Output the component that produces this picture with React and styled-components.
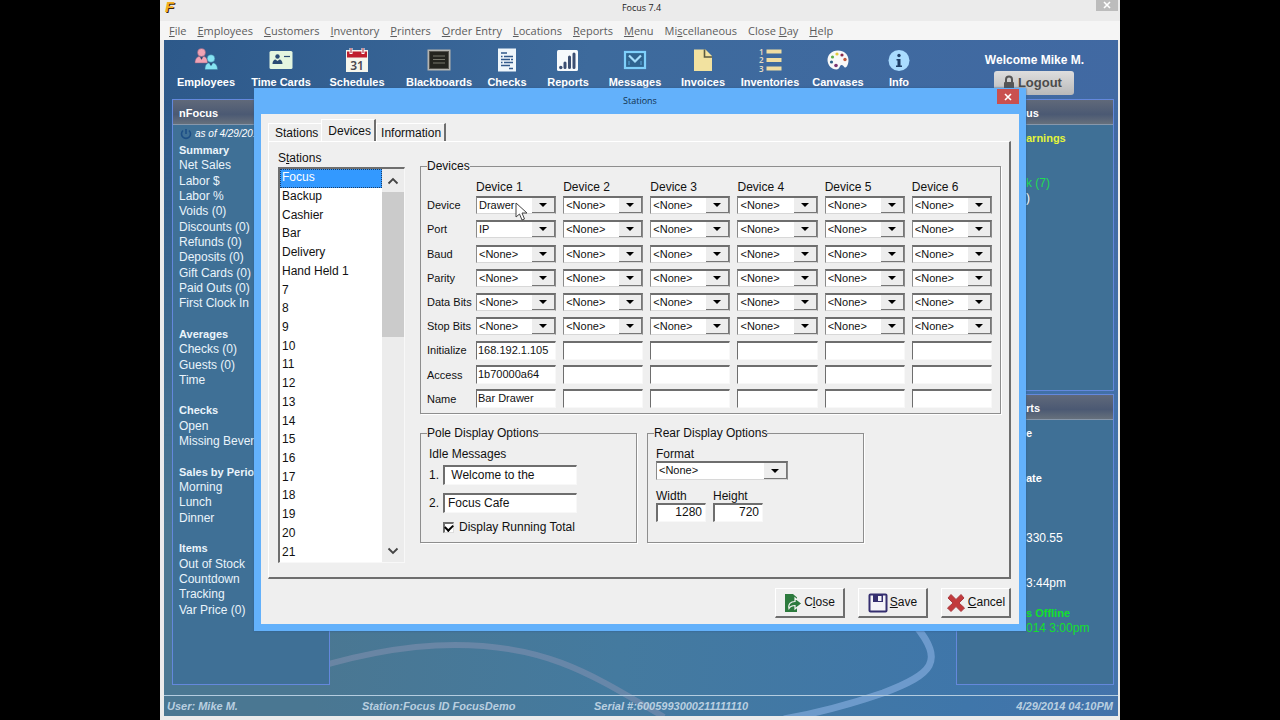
import React from 'react';
import { styled, createGlobalStyle } from 'styled-components';

const menuItems = [
    ['', 'F', 'ile'],
    ['', 'E', 'mployees'],
    ['', 'C', 'ustomers'],
    ['', 'I', 'nventory'],
    ['', 'P', 'rinters'],
    ['', 'O', 'rder Entry'],
    ['', 'L', 'ocations'],
    ['', 'R', 'eports'],
    ['', 'M', 'enu'],
    ['Mi', 's', 'cellaneous'],
    ['Close ', 'D', 'ay'],
    ['', 'H', 'elp'],
];

const summaryRows = [
    '#Summary', 'Net Sales', 'Labor $', 'Labor %', 'Voids (0)', 'Discounts (0)', 'Refunds (0)',
    'Deposits (0)', 'Gift Cards (0)', 'Paid Outs (0)', 'First Clock In', '',
    '#Averages', 'Checks (0)', 'Guests (0)', 'Time', '',
    '#Checks', 'Open', 'Missing Beverages', '',
    '#Sales by Period', 'Morning', 'Lunch', 'Dinner', '',
    '#Items', 'Out of Stock', 'Countdown', 'Tracking', 'Var Price (0)',
];

const stations = ['Focus', 'Backup', 'Cashier', 'Bar', 'Delivery', 'Hand Held 1'];
for (let i = 7; i <= 21; i++) stations.push(String(i));

const devices = [1, 2, 3, 4, 5, 6];
const selectRows = [
    { label: 'Device', first: 'Drawer' },
    { label: 'Port', first: 'IP' },
    { label: 'Baud' },
    { label: 'Parity' },
    { label: 'Data Bits' },
    { label: 'Stop Bits' },
];
const textRows = [
    { label: 'Initialize', first: '168.192.1.105' },
    { label: 'Access', first: '1b70000a64' },
    { label: 'Name', first: 'Bar Drawer' },
];

const tools = [
    {
        name: 'Employees', width: 74, icon: (
            <>
                <g fill="#f0a3b4" stroke="#8a5a78" strokeWidth="0.5">
                    <circle cx="7.500" cy="4.500" r="4" />
                    <path d="M1 15c0-4 2-6.500 4.500-6.500L7.500 11l2-2.500C12 8.500 13.500 11 13.500 15z" />
                </g>
                <path d="M6.500 9.500h2L7.500 12z" fill="#26456e" />
                <g fill="#86e3f2" stroke="#3a7fa0" strokeWidth="0.500">
                    <circle cx="17" cy="10.500" r="3.800" />
                    <path d="M11 21.500c0-4 1.500-6.500 4-6.500l2 2.500 2-2.500c2.500 0 4.500 2.500 4.500 6.500z" />
                </g>
                <path d="M16 15.500h2l-1 2.500z" fill="#26456e" />
            </>
        ),
    },
    {
        name: 'Time Cards', width: 76, icon: (
            <>
                <rect x="0.500" y="3" width="23" height="18" rx="1.500" fill="#e4f6e0" />
                <circle cx="8.500" cy="8.500" r="2.200" fill="#2a4c74" />
                <path d="M3.500 16c0-3 1.500-4.500 3-4.500l2 1.500 2-1.500c1.500 0 3 1.500 3 4.500z" fill="#2a4c74" />
                <path d="M15 8.500h6" stroke="#2a4c74" strokeWidth="1.200" />
            </>
        ),
    },
    {
        name: 'Schedules', width: 76, icon: (
            <>
                <rect x="1" y="2" width="22" height="22" fill="#f6f6ec" />
                <rect x="2" y="3.500" width="20" height="6" fill="#c01f2e" />
                <path d="M6 0v6M18 0v6" stroke="#fff" strokeWidth="3" />
                <path d="M6 0v5M18 0v5" stroke="#a01828" strokeWidth="1" />
                <text x="12" y="21.500" textAnchor="middle" fontFamily="'Noto Sans', sans-serif" fontSize="12" fontWeight="600" fill="#4a4a50">31</text>
            </>
        ),
    },
    {
        name: 'Blackboards', width: 88, icon: (
            <>
                <rect x="0.500" y="1.500" width="23" height="21" fill="#b4b4b0" />
                <rect x="2" y="3" width="20" height="18" fill="#55544f" />
                <rect x="3" y="4" width="18" height="16" fill="#24241f" />
                <path d="M6 8h12M6 11.500h12M6 15h12" stroke="#77776c" strokeWidth="1" />
            </>
        ),
    },
    {
        name: 'Checks', width: 48, icon: (
            <>
                <rect x="3" y="0.500" width="18" height="23" fill="#eef6fb" />
                <path d="M6 5h6M6 8.500h1.500M9 8.500h9M6 11.500h9M16 11.500h2M6 14.500h1.500M9 14.500h9M6 17.500h9M14 20.500h4" stroke="#31598a" strokeWidth="1.400" />
            </>
        ),
    },
    {
        name: 'Reports', width: 74, icon: (
            <>
                <rect x="1" y="2" width="21" height="21" rx="1.500" fill="#f7fafc" />
                <path d="M9 19.500V15M13.500 19.500V9M18 19.500V6" stroke="#3c4f72" strokeWidth="3" strokeLinecap="round" />
                <circle cx="4.800" cy="19.500" r="1.700" fill="#3c4f72" />
            </>
        ),
    },
    {
        name: 'Messages', width: 60, icon: (
            <>
                <rect x="2" y="4" width="20" height="16" fill="#2f6490" stroke="#7fd0fb" strokeWidth="2.200" />
                <path d="M6 7.500l6 6 6-6" fill="none" stroke="#a5defc" strokeWidth="2.200" />
                <path d="M6 17v-4M18 17v-4" stroke="#5aa9dc" strokeWidth="1" />
            </>
        ),
    },
    {
        name: 'Invoices', width: 76, icon: (
            <>
                <path d="M3 1.500h11.500L21 8v15H3z" fill="#f2e2a0" />
                <path d="M13.500 1.500V9H21" fill="none" stroke="#5a5a40" strokeWidth="1.600" />
            </>
        ),
    },
    {
        name: 'Inventories', width: 58, icon: (
            <>
                <path d="M8.500 3.500h15M8.500 12h15M8.500 20.500h15" stroke="#f0dda2" strokeWidth="4" />
                <g fontFamily="'Noto Sans', sans-serif" fontSize="8" fontWeight="600" fill="#e4dcc4">
                    <text x="1" y="6.500">1</text>
                    <text x="1" y="15">2</text>
                    <text x="1" y="23.500">3</text>
                </g>
            </>
        ),
    },
    {
        name: 'Canvases', width: 78, icon: (
            <>
                <path d="M12 2.500C5.500 2.500 1.500 7 1.500 12s4 9.500 9 9.500c3.500 0 2.500-4 5-4.500 2-.4 2.500 3 4 2.500C21.500 18.800 22.500 15 22.500 12c0-5.500-4.500-9.500-10.500-9.500z" fill="#f8f8f8" />
                <circle cx="11" cy="6" r="1.600" fill="#e2c93b" />
                <circle cx="16" cy="7" r="1.600" fill="#8a2a4a" />
                <circle cx="6.500" cy="9" r="1.600" fill="#5fae4a" />
                <circle cx="5.500" cy="14" r="1.600" fill="#2b5f86" />
                <circle cx="10" cy="17.500" r="1.800" fill="#7a3470" />
                <circle cx="19" cy="11.500" r="1.700" fill="#c0563a" />
            </>
        ),
    },
    {
        name: 'Info', width: 44, icon: (
            <>
                <circle cx="12" cy="12.500" r="10.500" fill="#a9dcff" />
                <circle cx="12" cy="7.500" r="1.700" fill="#1f3f68" />
                <path d="M9.500 11h4v6.500h1.500V19h-6v-1.500h1.500v-5H9.500z" fill="#1f3f68" />
            </>
        ),
    },
];

function Cross() {
    return (
        <svg width="8" height="8" viewBox="0 0 8 8" aria-hidden="true">
            <path d="M1 1l6 6M7 1l-6 6" stroke="#fff" strokeWidth="1.600" />
        </svg>
    );
}

function DropDown({ value = '<None>', tall, ...rest }) {
    return (
        <SelectBox $tall={tall}>
            <Select defaultValue={value} {...rest}>
                <option>{value}</option>
            </Select>
            <SelectArrow aria-hidden="true">
                <svg width="8" height="4" viewBox="0 0 8 4"><path d="M0 0h8L4 4z" fill="#000" /></svg>
            </SelectArrow>
        </SelectBox>
    );
}

function DeviceGrid() {
    return (
        <Grid>
            <span />
            {devices.map((n) => <ColumnHead key={n}>Device {n}</ColumnHead>)}
            {selectRows.map((row) => (
                <React.Fragment key={row.label}>
                    <RowHead>{row.label}</RowHead>
                    {devices.map((n) => (
                        <DropDown
                            key={n}
                            value={n === 1 && row.first ? row.first : '<None>'}
                            aria-label={`${row.label}, Device ${n}`}
                        />
                    ))}
                </React.Fragment>
            ))}
            {textRows.map((row) => (
                <React.Fragment key={row.label}>
                    <RowHead>{row.label}</RowHead>
                    {devices.map((n) => (
                        <TextBox
                            key={n}
                            $small
                            defaultValue={n === 1 ? row.first : ''}
                            aria-label={`${row.label}, Device ${n}`}
                        />
                    ))}
                </React.Fragment>
            ))}
        </Grid>
    );
}

function StationList() {
    return (
        <ListColumn>
            <ListLabel id="stations-label">S<u>t</u>ations</ListLabel>
            <ListFrame>
                <List role="listbox" aria-labelledby="stations-label">
                    {stations.map((name, i) => (
                        <ListItem key={name} role="option" aria-selected={i === 0} $selected={i === 0}>{name}</ListItem>
                    ))}
                </List>
                <ScrollBar>
                    <ScrollButton type="button" aria-label="Scroll up">
                        <svg width="12" height="8" viewBox="0 0 12 8"><path d="M1.500 6.500L6 2l4.500 4.500" fill="none" stroke="#444" strokeWidth="1.800" /></svg>
                    </ScrollButton>
                    <ScrollTrack><ScrollThumb /></ScrollTrack>
                    <ScrollButton type="button" aria-label="Scroll down">
                        <svg width="12" height="8" viewBox="0 0 12 8"><path d="M1.500 1.500L6 6l4.500-4.500" fill="none" stroke="#444" strokeWidth="1.800" /></svg>
                    </ScrollButton>
                </ScrollBar>
            </ListFrame>
        </ListColumn>
    );
}

function StationsDialog() {
    return (
        <Dialog role="dialog" aria-labelledby="dialog-title">
            <DialogTitle>
                <span id="dialog-title">Stations</span>
                <DialogClose type="button" aria-label="Close window"><Cross /></DialogClose>
            </DialogTitle>
            <DialogBody>
                <Tabs role="tablist">
                    <Tab type="button" role="tab">Stations</Tab>
                    <Tab type="button" role="tab" aria-selected="true" $active>Devices</Tab>
                    <Tab type="button" role="tab" $edge>Information</Tab>
                </Tabs>
                <TabPanel role="tabpanel">
                    <StationList />
                    <Forms>
                        <Fieldset>
                            <Legend>Devices</Legend>
                            <DeviceGrid />
                        </Fieldset>
                        <FieldsetRow>
                            <Fieldset>
                                <Legend>Pole Display Options</Legend>
                                <Pole>
                                    <FormText>Idle Messages</FormText>
                                    <Numbered>
                                        <label htmlFor="idle1">1.</label>
                                        <TextBox id="idle1" defaultValue=" Welcome to the" />
                                    </Numbered>
                                    <Numbered>
                                        <label htmlFor="idle2">2.</label>
                                        <TextBox id="idle2" defaultValue="Focus Cafe" />
                                    </Numbered>
                                    <CheckLabel>
                                        <CheckBox type="checkbox" defaultChecked />
                                        Display Running Total
                                    </CheckLabel>
                                </Pole>
                            </Fieldset>
                            <Fieldset>
                                <Legend>Rear Display Options</Legend>
                                <Rear>
                                    <FormText as="label" htmlFor="format">Format</FormText>
                                    <DropDown id="format" tall />
                                    <Sizes>
                                        <SizeField>Width<TextBox $right defaultValue="1280" /></SizeField>
                                        <SizeField>Height<TextBox $right defaultValue="720" /></SizeField>
                                    </Sizes>
                                </Rear>
                            </Fieldset>
                        </FieldsetRow>
                    </Forms>
                </TabPanel>
                <Actions>
                    <ActionButton type="button">
                        <svg width="18" height="20" viewBox="0 0 18 20">
                            <path d="M1 1h8l4 3.500V19H1z" fill="#2c7a3d" />
                            <path d="M5 15.500c-1-4.500 1.500-7 6-7V5l7 5.500-7 5.500v-3.500c-3 0-4.500.5-6 3z" fill="#2c7a3d" stroke="#f4f4f4" strokeWidth="1.200" />
                        </svg>
                        <span>C<u>l</u>ose</span>
                    </ActionButton>
                    <ActionButton type="button">
                        <svg width="20" height="20" viewBox="0 0 20 20">
                            <rect x="1.500" y="1.500" width="17" height="17" rx="1" fill="#f4f4f8" stroke="#352f70" strokeWidth="2" />
                            <path d="M5 2v7h10V2z" fill="#352f70" />
                            <rect x="10" y="3" width="3.500" height="5" fill="#f4f4f8" />
                        </svg>
                        <span><u>S</u>ave</span>
                    </ActionButton>
                    <ActionButton type="button">
                        <svg width="20" height="20" viewBox="0 0 20 20">
                            <path d="M2 5l3-3.500 5 5 5-5L18 5l-5 5 5.500 5-3.500 3.500-5-5-5 5L1.500 15 7 10z" fill="#c23a3c" stroke="#a93a40" strokeWidth="1" />
                        </svg>
                        <span><u>C</u>ancel</span>
                    </ActionButton>
                </Actions>
            </DialogBody>
            <Pointer width="13" height="20" viewBox="0 0 13 20" aria-hidden="true">
                <path d="M1 1v14l3.500-3 2.500 6 2.500-1-2.500-6H12z" fill="#fff" stroke="#444" strokeWidth="1" />
            </Pointer>
        </Dialog>
    );
}

function App() {
    return (
        <Screen>
            <GlobalStyle />
            <AppWindow>
                <TitleBar>
                    <Logo>F</Logo>
                    <WindowTitle>Focus 7.4</WindowTitle>
                    <WindowClose type="button" aria-label="Close application"><Cross /></WindowClose>
                </TitleBar>
                <MenuBar>
                    {menuItems.map(([before, key, after]) => (
                        <MenuItem key={key + after} type="button">{before}<u>{key}</u>{after}</MenuItem>
                    ))}
                </MenuBar>
                <Desktop>
                    <Swirl viewBox="0 0 954 100" preserveAspectRatio="none" aria-hidden="true">
                        <path d="M120 62Q215 29 291 29C385 29 430 60 500 101" fill="none" stroke="#8a93b4" strokeOpacity="0.500" strokeWidth="6" />
                        <path d="M752 10C780 45 770 58 719 77Q670 94 620 103" fill="none" stroke="#86aede" strokeOpacity="0.650" strokeWidth="7" />
                    </Swirl>
                    <ToolBar>
                        {tools.map((tool) => (
                            <Tool key={tool.name} type="button" $width={tool.width}>
                                <ToolIcon viewBox="0 0 24 24" aria-hidden="true">{tool.icon}</ToolIcon>
                                {tool.name}
                            </Tool>
                        ))}
                        <UserBox>
                            Welcome Mike M.
                            <Logout type="button">
                                <svg width="12" height="16" viewBox="0 0 12 16" aria-hidden="true">
                                    <path d="M3 8V4.500a3 3 0 0 1 6 0V8" fill="none" stroke="#555" strokeWidth="2" />
                                    <rect x="1" y="7" width="10" height="8" rx="1" fill="#555" />
                                </svg>
                                Logout
                            </Logout>
                        </UserBox>
                    </ToolBar>
                    <Columns>
                        <Panel>
                            <PanelTitle>nFocus</PanelTitle>
                            <AsOf>
                                <svg width="12" height="12" viewBox="0 0 12 12" aria-hidden="true">
                                    <path d="M3 2.500a4.500 4.500 0 1 0 6 0M6 1v5" fill="none" stroke="#1d4f86" strokeWidth="1.600" />
                                </svg>
                                as of 4/29/2014
                            </AsOf>
                            <SummaryList>
                                {summaryRows.map((row, i) => (
                                    <SummaryRow key={i} $bold={row[0] === '#'}>{row.replace('#', '')}</SummaryRow>
                                ))}
                            </SummaryList>
                        </Panel>
                        <RightColumn>
                            <Panel $side>
                                <PanelTitle $side>us</PanelTitle>
                                <SideRows>
                                    <SideRow $row={1} $bold $color="#e4f53a">arnings</SideRow>
                                    <SideRow $row={4} $color="#1fdc52">k (7)</SideRow>
                                    <SideRow $row={5}>)</SideRow>
                                </SideRows>
                            </Panel>
                            <Panel $side>
                                <PanelTitle $side>rts</PanelTitle>
                                <SideRows>
                                    <SideRow $row={1} $bold>e</SideRow>
                                    <SideRow $row={4} $bold>ate</SideRow>
                                    <SideRow $row={8}>330.55</SideRow>
                                    <SideRow $row={11}>3:44pm</SideRow>
                                    <SideRow $row={13} $bold $color="#12e02c">s Offline</SideRow>
                                    <SideRow $row={14} $color="#12e02c">014 3:00pm</SideRow>
                                </SideRows>
                            </Panel>
                        </RightColumn>
                    </Columns>
                    <StatusBar>
                        <span>User: Mike M.</span>
                        <span>Station:Focus ID FocusDemo</span>
                        <span>Serial #:6005993000211111110</span>
                        <span>4/29/2014 04:10PM</span>
                    </StatusBar>
                </Desktop>
                <StationsDialog />
            </AppWindow>
        </Screen>
    );
}

const GlobalStyle = createGlobalStyle`
    * {
        box-sizing: border-box;
    }
    body {
        margin: 0;
        background-color: #000;
        font-family: 'Liberation Sans', Arial, sans-serif;
        font-size: 12px;
        line-height: 14px;
    }
    button, input, select {
        margin: 0;
        padding: 0;
        border: 0;
        font: inherit;
        color: inherit;
    }
`

const Screen = styled.div`
    min-height: 100vh;
    padding: 0 160px;
    display: flex;
    background-color: #000;
`

const AppWindow = styled.div`
    position: relative;
    flex: 1;
    display: flex;
    flex-direction: column;
    background-color: #ebebeb;
`

const TitleBar = styled.div`
    display: grid;
    grid-template-columns: 1fr auto 1fr;
    align-items: start;
    height: 21px;
    padding: 0 2px 0 5px;
`

const Logo = styled.span`
    font-size: 15px;
    line-height: 14px;
    font-weight: 700;
    font-style: italic;
    color: #f5b021;
    text-shadow: 1px 1px 0 #3a2508;
`

const WindowTitle = styled.span`
    font-family: 'Open Sans', sans-serif;
    font-size: 9px;
    line-height: 16px;
    color: #222;
`

const WindowClose = styled.button`
    justify-self: end;
    display: flex;
    align-items: center;
    justify-content: center;
    width: 22px;
    height: 11px;
    padding-bottom: 2px;
    background-color: #bcbcbc;
`

const MenuBar = styled.div`
    display: flex;
    align-items: center;
    gap: 11px;
    height: 19px;
    padding-left: 9px;
    background-color: #f5f5f5;
`

const MenuItem = styled.button`
    background: none;
    font-family: 'Open Sans', sans-serif;
    font-size: 11px;
    white-space: nowrap;
    color: #5c5c5c;
`

const Desktop = styled.div`
    position: relative;
    flex: 1;
    display: flex;
    flex-direction: column;
    margin: 0 2px 4px 4px;
    background: linear-gradient(100deg, #2d598a 0%, #3d6a9c 40%, #4269a4 100%);

    &::before {
        content: '';
        position: absolute;
        inset: 60px 0 0;
        background: linear-gradient(95deg, #4a7792 20%, #447a9f 50%, #3f76aa 85%, #4473ab 100%);
        mask-image: linear-gradient(transparent, #000 70%);
    }
`

const Swirl = styled.svg`
    position: absolute;
    left: 0;
    bottom: 0;
    width: 100%;
    height: 100px;
`

const ToolBar = styled.div`
    position: relative;
    display: flex;
    align-items: flex-start;
    height: 59px;
    padding: 8px 4px 0 5px;
`

const Tool = styled.button`
    flex: 0 1 ${({ $width }) => $width}px;
    min-width: 0;
    display: flex;
    flex-direction: column;
    align-items: center;
    gap: 3px;
    background: none;
    font-size: 11px;
    font-weight: 700;
    white-space: nowrap;
    color: #fff;
`

const ToolIcon = styled.svg`
    width: 24px;
    height: 24px;
    overflow: visible;
`

const UserBox = styled.div`
    display: flex;
    flex-direction: column;
    align-items: center;
    gap: 4px;
    margin: 5px 30px 0 auto;
    font-size: 12px;
    font-weight: 700;
    white-space: nowrap;
    color: #fff;
`

const Logout = styled.button`
    display: flex;
    align-items: center;
    justify-content: center;
    gap: 3px;
    width: 80px;
    height: 24px;
    padding-right: 4px;
    border-radius: 3px;
    background: linear-gradient(#dedede, #b9b9b9);
    font-size: 13px;
    color: #4b4b4b;
`

const Columns = styled.div`
    position: relative;
    flex: 1;
    display: flex;
    justify-content: space-between;
    padding: 0 4px 0 8px;
`

const Panel = styled.section`
    flex: ${({ $side }) => ($side ? '1' : '0 0 158px')};
    display: flex;
    flex-direction: column;
    border: 1px solid #6488dc;
    background-color: #3f7096;
`

const RightColumn = styled.div`
    flex: 0 0 158px;
    display: flex;
    flex-direction: column;
    gap: 3px;
`

const PanelTitle = styled.h2`
    margin: 0;
    height: 25px;
    padding: 0 6px 0 ${({ $side }) => ($side ? 69 : 6)}px;
    border-bottom: 1px solid #8797ab;
    background: linear-gradient(#60697a, #4b5973 60%, #66707c);
    font-size: 11px;
    line-height: 26px;
    color: #fff;
`

const AsOf = styled.div`
    display: flex;
    align-items: center;
    gap: 3px;
    height: 18px;
    padding-left: 7px;
    font-size: 10px;
    font-style: italic;
    white-space: nowrap;
    color: #fff;
`

const SummaryList = styled.ul`
    display: grid;
    grid-auto-rows: 1fr;
    height: 475px;
    margin: 0;
    padding: 0 6px;
    list-style: none;
`

const SummaryRow = styled.li`
    min-height: 14px;
    font-size: ${({ $bold }) => ($bold ? 11 : 12)}px;
    font-weight: ${({ $bold }) => ($bold ? 700 : 400)};
    white-space: nowrap;
    color: #eaf4fb;
`

const SideRows = styled.ul`
    display: grid;
    grid-auto-rows: 15px;
    margin: 6px 0 0;
    padding: 0 0 0 69px;
    list-style: none;
`

const SideRow = styled.li`
    grid-row: ${({ $row }) => $row};
    font-size: ${({ $bold }) => ($bold ? 11 : 12)}px;
    font-weight: ${({ $bold }) => ($bold ? 700 : 400)};
    white-space: nowrap;
    color: ${({ $color }) => $color || '#fff'};
`

const StatusBar = styled.footer`
    position: relative;
    display: grid;
    grid-template-columns: 195px 232px 1fr auto;
    align-items: center;
    height: 21px;
    margin-top: 10px;
    padding: 0 5px 0 3px;
    border-top: 1px solid #b5cde0;
    font-size: 11px;
    font-weight: 700;
    font-style: italic;
    color: #b9cfe0;
`

const Dialog = styled.div`
    position: absolute;
    top: 88px;
    left: 94px;
    right: 94px;
    padding: 0 7px 7px;
    background-color: #63b1fb;
    box-shadow: 0 0 2px #2c5c90;
    color: #111;
`

const DialogTitle = styled.div`
    position: relative;
    height: 26px;
    font-family: 'Open Sans', sans-serif;
    font-size: 9px;
    line-height: 26px;
    text-align: center;
    color: #12324e;
`

const DialogClose = styled.button`
    position: absolute;
    top: 1px;
    right: 0;
    display: flex;
    align-items: center;
    justify-content: center;
    width: 22px;
    height: 15px;
    background-color: #c9504f;
`

const DialogBody = styled.div`
    padding: 5px 8px 6px 7px;
    background-color: #efefef;
`

const Tabs = styled.div`
    display: flex;
    align-items: flex-end;
    height: 22px;
`

const Tab = styled.button`
    height: ${({ $active }) => ($active ? 22 : 18)}px;
    padding: 0 3px 0 ${({ $edge }) => ($edge ? 4 : 6)}px;
    border-top: 1px solid #fff;
    border-left: 1px solid #fff;
    border-right: ${({ $active, $edge }) => ($active || $edge ? '2px solid #6e6e6e' : '0')};
    background-color: #efefef;
    line-height: ${({ $active }) => ($active ? 20 : 16)}px;
`

const TabPanel = styled.div`
    display: flex;
    gap: 15px;
    padding: 9px 8px 14px 9px;
    border: 1px solid #fff;
    border-right: 2px solid #6e6e6e;
    border-bottom: 2px solid #6e6e6e;
`

const ListColumn = styled.div`
    flex: 0 0 127px;
`

const ListLabel = styled.div`
    height: 16px;
`

const ListFrame = styled.div`
    display: flex;
    height: 396px;
    border: 1px solid #f8f8f8;
    border-top: 2px solid #6e6e6e;
    border-left: 2px solid #6e6e6e;
    background-color: #fff;
`

const List = styled.ul`
    flex: 1;
    display: grid;
    grid-auto-rows: 1fr;
    margin: 0;
    padding: 0;
    list-style: none;
`

const ListItem = styled.li`
    display: flex;
    align-items: center;
    min-height: 18px;
    padding: 0 0 2px 1px;
    border: 1px dotted ${({ $selected }) => ($selected ? '#1b3d66' : 'transparent')};
    background-color: ${({ $selected }) => ($selected ? '#3399ff' : 'transparent')};
    color: ${({ $selected }) => ($selected ? '#fff' : '#111')};
`

const ScrollBar = styled.div`
    display: flex;
    flex-direction: column;
    width: 22px;
    background-color: #ececec;
`

const ScrollButton = styled.button`
    display: flex;
    align-items: center;
    justify-content: center;
    height: 23px;
    background: none;
`

const ScrollTrack = styled.div`
    flex: 1;
`

const ScrollThumb = styled.div`
    height: 145px;
    background-color: #cbcbcb;
`

const Forms = styled.div`
    flex: 1;
    display: flex;
    flex-direction: column;
    gap: 12px;
    padding-top: 8px;
`

const FieldsetRow = styled.div`
    display: grid;
    grid-template-columns: 217px 217px;
    gap: 10px;
`

const Fieldset = styled.fieldset`
    min-width: 0;
    margin: 0;
    padding: 0 8px;
    border: 1px solid #8e8e8e;
    box-shadow: 1px 1px 0 #fff;
`

const Legend = styled.legend`
    margin-left: -2px;
    padding: 0;
    line-height: 14px;
`

const Grid = styled.div`
    display: grid;
    grid-template-columns: 40px repeat(6, 1fr);
    grid-template-rows: 12px repeat(9, 1fr);
    column-gap: 7px;
    align-items: center;
    height: 230px;
    margin: 8px 0 2px;
`

const ColumnHead = styled.span`
    line-height: 12px;
`

const RowHead = styled.span`
    margin-left: -2px;
    font-size: 11px;
    white-space: nowrap;
`

const SelectBox = styled.div`
    position: relative;
    display: flex;
    width: ${({ $tall }) => ($tall ? '132px' : '100%')};
    height: ${({ $tall }) => ($tall ? 19 : 18)}px;
    border: 1px solid #8a8a8a;
    border-top: 2px solid #6e6e6e;
    border-bottom-color: #d8d8d8;
    background-color: #fff;
`

const Select = styled.select`
    flex: 1;
    min-width: 0;
    padding: 0 0 2px 2px;
    appearance: none;
    background: none;
    font-size: 11px;
`

const SelectArrow = styled.span`
    position: absolute;
    top: 0;
    right: 0;
    bottom: 0;
    display: flex;
    align-items: center;
    justify-content: center;
    width: 23px;
    border-right: 1px solid #777;
    border-bottom: 1px solid #777;
    background-color: #ededed;
    pointer-events: none;
`

const TextBox = styled.input`
    width: 100%;
    min-width: 0;
    height: ${({ $small, $right }) => ($small || $right ? 19 : 20)}px;
    padding: 0 ${({ $small }) => ($small ? 1 : 3)}px 2px;
    border: 1px solid #f8f8f8;
    border-top: 2px solid #6e6e6e;
    border-left: ${({ $small }) => ($small ? 1 : 2)}px solid #6e6e6e;
    background-color: #fff;
    font-size: ${({ $small }) => ($small ? 11 : 12)}px;
    text-align: ${({ $right }) => ($right ? 'right' : 'left')};
`

const FormText = styled.span`
    line-height: 14px;
`

const Pole = styled.div`
    display: flex;
    flex-direction: column;
    gap: 8px;
    padding: 7px 0 9px;

    ${FormText} {
        margin-bottom: -4px;
    }
`

const Numbered = styled.div`
    display: grid;
    grid-template-columns: 14px 134px;
    align-items: center;
`

const CheckLabel = styled.label`
    display: flex;
    align-items: center;
    gap: 5px;
    padding-left: 14px;
    line-height: 12px;
`

const CheckBox = styled.input`
    appearance: none;
    display: flex;
    align-items: center;
    justify-content: center;
    width: 11px;
    height: 11px;
    border: 1px solid #ddd;
    border-top: 2px solid #6e6e6e;
    border-left: 2px solid #6e6e6e;
    background-color: #fff;

    &:checked::before {
        content: '';
        width: 7px;
        height: 4px;
        margin-bottom: 2px;
        border-left: 2px solid #000;
        border-bottom: 2px solid #000;
        transform: rotate(-45deg);
    }
`

const Rear = styled.div`
    display: flex;
    flex-direction: column;
    padding: 7px 0 0;
`

const Sizes = styled.div`
    display: flex;
    gap: 7px;
    margin-top: 9px;
`

const SizeField = styled.label`
    display: flex;
    flex-direction: column;
    width: 50px;
`

const Actions = styled.div`
    display: flex;
    justify-content: flex-end;
    gap: 13px;
    margin-top: 9px;
`

const ActionButton = styled.button`
    display: flex;
    align-items: center;
    justify-content: center;
    gap: 2px;
    width: 70px;
    height: 30px;
    border: 1px solid #fff;
    border-right: 2px solid #6e6e6e;
    border-bottom: 2px solid #6e6e6e;
    background-color: #efefef;

    span {
        padding-bottom: 2px;
    }
`

const Pointer = styled.svg`
    position: absolute;
    left: 261px;
    top: 114px;
`

export default App;
